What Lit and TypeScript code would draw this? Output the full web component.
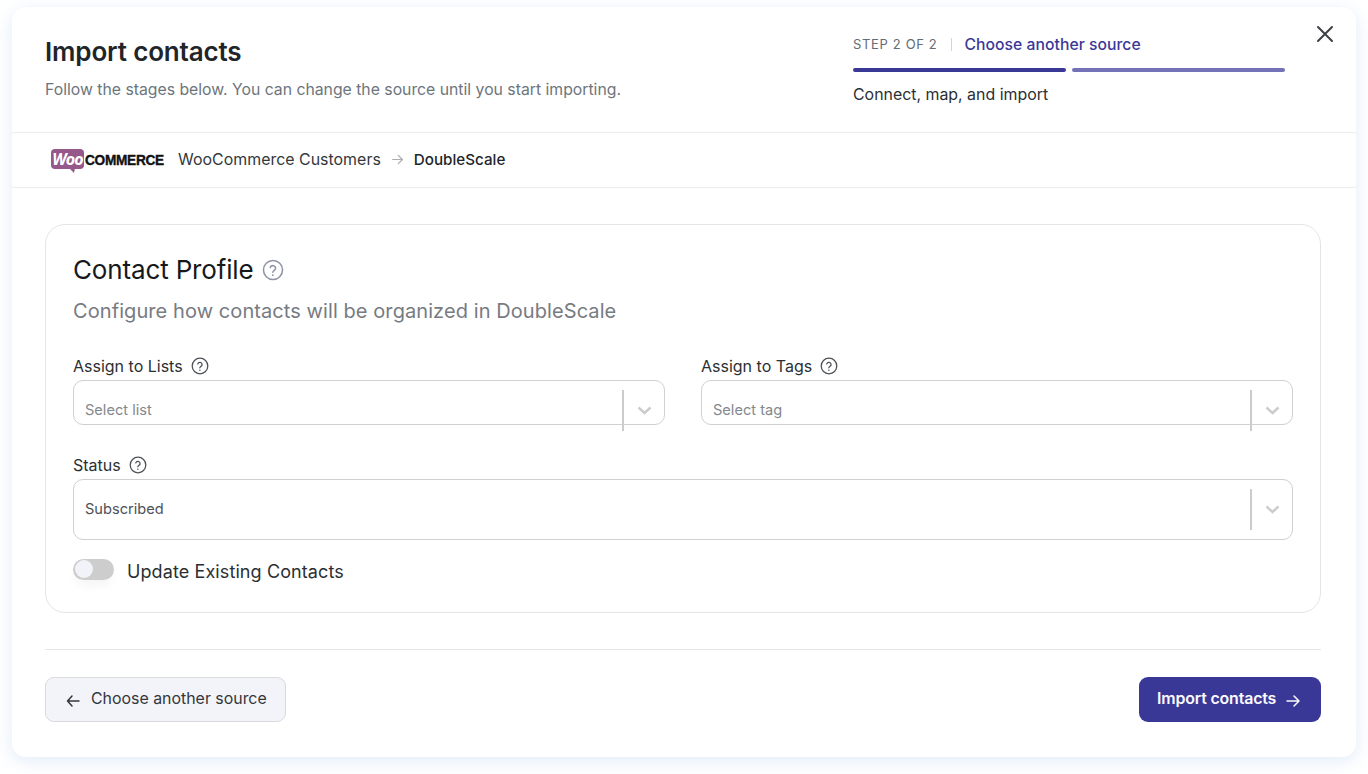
import { LitElement, html, css, svg } from "lit";
import { customElement } from "lit/decorators.js";

const help = (s: number) => html`<svg class="help" width=${s} height=${s} viewBox="0 0 24 24" fill="none" stroke="currentColor" stroke-width="1.7" stroke-linecap="round" stroke-linejoin="round"><circle cx="12" cy="12" r="10.4"/><path d="M9 9.2a3 3 0 0 1 5.8 1c0 2-3 2.8-3 4.2"/><path d="M11.8 17.6h.01" stroke-width="2"/></svg>`;
const chevron = svg`<path d="M1.5 1.5 L7.5 7 L13.5 1.5" fill="none" stroke="#cccccc" stroke-width="2.4"/>`;
const arrow = (dir: "l" | "r") => html`<svg class="arrow" width="16" height="16" viewBox="0 0 16 16" fill="none" stroke="currentColor" stroke-width="1.5" stroke-linecap="round" stroke-linejoin="round">${dir === "r" ? svg`<path d="M2 8h12M9 3l5 5-5 5"/>` : svg`<path d="M14 8H2.5M7 3 2.5 8 7 13"/>`}</svg>`;

@customElement("app-root")
export class AppRoot extends LitElement {
  static styles = css`
    :host { display: block; box-sizing: border-box; height: 774px; padding: 7px 12px 17px; background: #fff; font-family: Inter, "Liberation Sans", sans-serif; color: #1f2328; }
    * { box-sizing: border-box; }
    .modal { height: 750px; background: #fff; border-radius: 14px; box-shadow: 0 4px 18px rgba(120, 170, 225, 0.22); display: flex; flex-direction: column; }
    .head { height: 126px; flex: none; display: flex; justify-content: space-between; padding: 0 19px 0 33px; border-bottom: 1px solid #ebecef; }
    h1 { margin: 28px 0 0; font-size: 26px; line-height: 34px; font-weight: 600; letter-spacing: -0.15px; color: #212529; }
    .sub { margin: 10px 0 0; font-size: 15.77px; line-height: 22px; color: #6c757d; }
    .right { display: flex; }
    .steps { width: 432px; margin-right: 28px; padding-top: 27px; }
    .stepline { display: flex; align-items: center; height: 20px; }
    .stepno { font-size: 13px; color: #646b74; letter-spacing: 0.65px; }
    .pipe { width: 1px; height: 13px; background: #d3d5d9; margin: 0 12px 0 14px; }
    .link { font-size: 15.7px; font-weight: 500; color: #3b3897; letter-spacing: 0.05px; }
    .bars { display: flex; gap: 6px; margin-top: 14px; width: 432px; }
    .bar { width: 213px; height: 4px; border-radius: 2px; background: #3a3897; }
    .bar.light { background: #7472b6; }
    .desc { margin-top: 12px; font-size: 15.9px; line-height: 22px; font-weight: 400; color: #2b2f33; }
    .close { width: 24px; height: 24px; margin-top: 15px; color: #3d4146; }
    .crumb { height: 55px; flex: none; display: flex; align-items: center; padding-left: 39px; border-bottom: 1px solid #ebecef; font-size: 15.95px; padding-bottom: 2px; }
    .logo { display: flex; align-items: center; width: 127px; flex: none; }
    .woo { position: relative; display: block; width: 33px; height: 20px; border-radius: 4px; background: #96588a; color: #fff; font-size: 16px; line-height: 20px; font-weight: 700; font-family: "Open Sans", sans-serif; text-align: center; letter-spacing: -0.9px; font-style: italic; }
    .woo::after { content: ""; position: absolute; left: 18px; top: 19px; border-top: 5px solid #96588a; border-left: 5px solid transparent; border-right: 1px solid transparent; }
    .comm { font-family: "Liberation Sans", sans-serif; font-size: 15px; font-weight: 700; color: #111; transform: scaleX(0.91); transform-origin: left center; margin-left: 1px; letter-spacing: -0.3px; -webkit-text-stroke: 0.4px #111; white-space: nowrap; }
    .src { color: #33383d; }
    .crumb .arrow { width: 13px; height: 13px; margin: 0 10px; color: #a9adb3; }
    .dst { font-size: 15.2px; font-weight: 500; color: #212529; }
    .body { flex: 1; padding: 36px 35px 0 33px; display: flex; flex-direction: column; }
    .card { height: 389px; border: 1px solid #e4e5e8; border-radius: 20px; padding: 0 27px; }
    .ct { display: flex; align-items: center; gap: 8px; margin-top: 27px; height: 36px; }
    h2 { margin: 0; font-size: 26px; line-height: 36px; font-weight: 400; color: #16191c; letter-spacing: -0.15px; }
    .ct .help { color: #8f95a6; }
    .cs { margin: 9px 0 0; font-size: 20px; line-height: 28px; color: #777b82; letter-spacing: 0.08px; }
    .grid { display: grid; grid-template-columns: 592px 592px; gap: 0 36px; margin-top: 33px; }
    .full { grid-column: 1 / 3; margin-top: 32px; }
    .lab { display: flex; align-items: center; gap: 8px; height: 18px; font-size: 16px; line-height: 18px; font-weight: 400; color: #2b2f33; margin: -1px 0 5px; }
    .lab .help { color: #4d5257; }
    .sel { height: 45px; border: 1px solid #cfd0d2; border-radius: 10px; display: flex; padding: 9px 0 0 11px; }
    .sel.tall { height: 61px; }
    .val { flex: 1; font-size: 14.6px; line-height: 20px; color: #84888e; margin-top: 10px; }
    .val.on { color: #4c5056; }
    .ind { width: 42px; height: 41px; flex: none; border-left: 2px solid #cccccc; display: flex; align-items: center; justify-content: center; }
    .tog { display: flex; align-items: center; gap: 13px; margin-top: 20px; height: 24px; }
    .track { position: relative; width: 41px; height: 21px; border-radius: 11px; background: #cdcdcd; box-shadow: 0 8px 10px -2px rgba(0,0,0,0.04); margin-top: -6px; flex: none; }
    .knob { position: absolute; left: 1.5px; top: 1.5px; width: 18px; height: 18px; border-radius: 50%; background: #f2f3f8; }
    .tl { font-size: 18px; line-height: 24px; color: #2b2f33; letter-spacing: 0.1px; }
    .foot { margin-top: 36px; border-top: 1px solid #e6e7ea; padding-top: 27px; display: flex; justify-content: space-between; }
    .btn { height: 45px; border-radius: 9px; display: flex; align-items: center; font-size: 15.9px; }
    .btn span { margin-bottom: 2px; }
    .back { width: 241px; border: 1px solid #d9dade; background: #f3f4f9; color: #33373c; padding-left: 19px; gap: 10px; font-weight: 400; }
    .next { width: 182px; background: #3a3897; color: #fafaff; padding-left: 18px; gap: 9px; font-weight: 600; letter-spacing: -0.15px; }
    .next .arrow { margin-top: 2px; } .back .arrow { margin-top: 2px; }
  `;

  private field(label: string, value: string, opts: { tall?: boolean; on?: boolean; full?: boolean } = {}) {
    return html`<div class=${opts.full ? "full" : ""}>
      <div class="lab">${label} ${help(18)}</div>
      <div class="sel ${opts.tall ? "tall" : ""}">
        <div class="val ${opts.on ? "on" : ""}">${value}</div>
        <div class="ind"><svg width="15" height="9" viewBox="0 0 15 9">${chevron}</svg></div>
      </div>
    </div>`;
  }

  render() {
    return html`<div class="modal">
      <div class="head">
        <div>
          <h1>Import contacts</h1>
          <p class="sub">Follow the stages below. You can change the source until you start importing.</p>
        </div>
        <div class="right">
          <div class="steps">
            <div class="stepline"><span class="stepno">STEP 2 OF 2</span><span class="pipe"></span><span class="link">Choose another source</span></div>
            <div class="bars"><div class="bar"></div><div class="bar light"></div></div>
            <div class="desc">Connect, map, and import</div>
          </div>
          <svg class="close" viewBox="0 0 24 24" fill="none" stroke="currentColor" stroke-width="2" stroke-linecap="round"><path d="M5 5l14 14M19 5 5 19"/></svg>
        </div>
      </div>
      <div class="crumb">
        <div class="logo"><span class="woo">Woo</span><span class="comm">COMMERCE</span></div>
        <span class="src">WooCommerce Customers</span>${arrow("r")}<span class="dst">DoubleScale</span>
      </div>
      <div class="body">
        <div class="card">
          <div class="ct"><h2>Contact Profile</h2>${help(22)}</div>
          <p class="cs">Configure how contacts will be organized in DoubleScale</p>
          <div class="grid">
            ${this.field("Assign to Lists", "Select list")}
            ${this.field("Assign to Tags", "Select tag")}
            ${this.field("Status", "Subscribed", { tall: true, on: true, full: true })}
          </div>
          <div class="tog"><div class="track"><div class="knob"></div></div><span class="tl">Update Existing Contacts</span></div>
        </div>
        <div class="foot">
          <div class="btn back">${arrow("l")}<span>Choose another source</span></div>
          <div class="btn next"><span>Import contacts</span>${arrow("r")}</div>
        </div>
      </div>
    </div>`;
  }
}
